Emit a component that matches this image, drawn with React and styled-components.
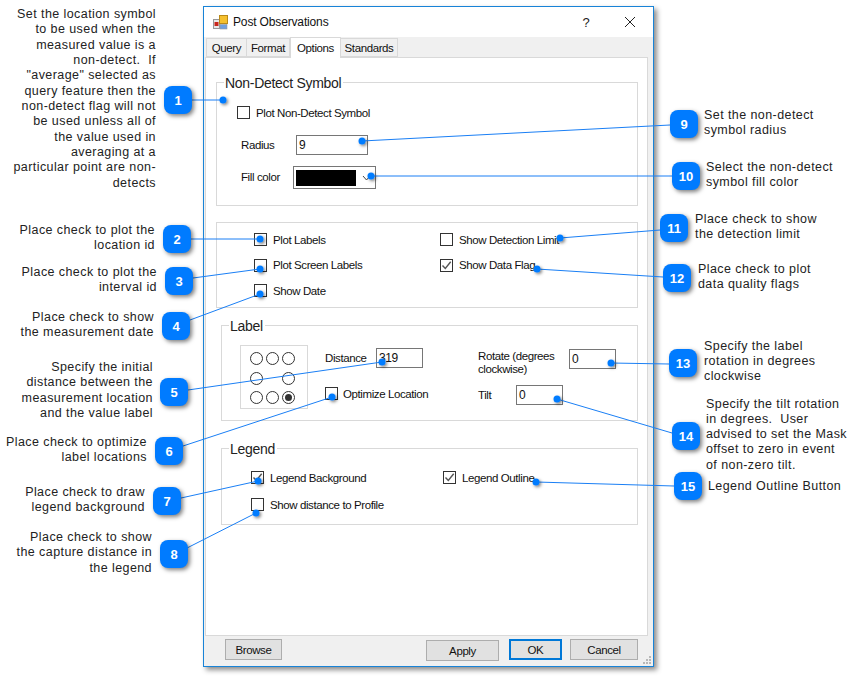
import React from "react";
import styled, { createGlobalStyle, css } from "styled-components";

const GlobalStyle = createGlobalStyle`
  html, body { margin: 0; padding: 0; background: #fff; }
  * { box-sizing: border-box; }
`;

const Canvas = styled.div`
  position: relative;
  width: 853px;
  height: 677px;
  padding: 6px 0 0 203px;
  overflow: hidden;
  font-family: "Liberation Sans", Arial, sans-serif;
`;

const Dialog = styled.div`
  position: relative;
  width: 451px;
  height: 661px;
  display: flex;
  flex-direction: column;
  background: #f0f0f0;
  border: 1px solid #1883d7;
  box-shadow: 3px 3px 5px rgba(0, 0, 0, 0.45);
  font-size: 11.5px;
  letter-spacing: -0.4px;
  color: #111;
`;

const TitleBar = styled.div`
  height: 30px;
  flex: none;
  display: flex;
  align-items: center;
  background: #fff;
  padding-left: 9px;
  font-size: 12px;
  letter-spacing: -0.15px;
`;

const TitleText = styled.span`
  margin-left: 5px;
  flex: 1;
`;

const HelpGlyph = styled.span`
  width: 20px;
  text-align: center;
  font-size: 13px;
  color: #222;
`;

const CloseButton = styled.span`
  display: flex;
  width: 12px;
  margin: 0 17px 0 28px;
`;

const TabStrip = styled.div`
  height: 20px;
  flex: none;
  display: flex;
  align-items: flex-end;
  padding-left: 2px;
`;

const Tab = styled.div`
  width: ${(p) => p.$w}px;
  height: ${(p) => (p.$active ? 21 : 19)}px;
  display: flex;
  align-items: center;
  justify-content: center;
  background: ${(p) => (p.$active ? "#fff" : "#f0f0f0")};
  border: 1px solid #d9d9d9;
  border-left-width: ${(p) => (p.$active ? 1 : 0)}px;
  border-bottom-width: ${(p) => (p.$active ? 0 : 1)}px;
  margin-bottom: ${(p) => (p.$active ? -1 : 0)}px;
  position: relative;
  z-index: ${(p) => (p.$active ? 1 : 0)};
  &:first-child { border-left-width: 1px; }
`;

const Panel = styled.div`
  flex: none;
  height: 579px;
  margin: 0 5px 0 1px;
  padding: 24px 9px 0 10px;
  background: #fff;
  border: 1px solid #d9d9d9;
`;

const Group = styled.div`
  position: relative;
  height: ${(p) => p.$h}px;
  margin-top: ${(p) => p.$top || 0}px;
  margin-left: ${(p) => p.$indent || 0}px;
  border: 1px solid #d9d9d9;
  padding: ${(p) => p.$pad};
`;

const GroupTitle = styled.span`
  position: absolute;
  top: -8px;
  left: 7px;
  padding: 0 2px 0 1px;
  background: #fff;
  font-size: 14px;
  line-height: 16px;
  letter-spacing: -0.3px;
  color: #222;
`;

const CheckRow = styled.div`
  display: flex;
  align-items: center;
  gap: 6px;
  height: 13px;
  white-space: nowrap;
`;

const CheckBox = styled.span`
  width: 13px;
  height: 13px;
  flex: none;
  display: flex;
  background: #fff;
  border: 1px solid #333;
`;

const FieldRow = styled.div`
  display: flex;
  align-items: ${(p) => p.$align || "center"};
  margin-top: ${(p) => p.$top || 0}px;
`;

const FieldLabel = styled.span`
  width: ${(p) => p.$w}px;
  flex: none;
  margin-left: ${(p) => p.$indent || 0}px;
  margin-top: ${(p) => p.$drop || 0}px;
  line-height: 13px;
`;

const ValueBox = styled.div`
  width: ${(p) => p.$w}px;
  height: 20px;
  flex: none;
  display: flex;
  align-items: center;
  padding-left: 2px;
  background: #fff;
  border: 1px solid #767676;
  font-size: 12px;
`;

const ColorCombo = styled.div`
  width: 83px;
  height: 23px;
  display: flex;
  align-items: center;
  padding-left: 2px;
  gap: 6px;
  border: 1px solid #767676;
`;

const ColorSwatch = styled.span`
  width: 60px;
  height: 16px;
  background: #000;
`;

const FlagGrid = styled.div`
  display: grid;
  grid-template-columns: ${(p) => p.$col}px 1fr;
  grid-auto-rows: ${(p) => p.$row}px;
`;

const LabelLayout = styled.div`
  display: flex;
`;

const AnchorGrid = styled.div`
  width: 68px;
  height: 64px;
  flex: none;
  display: grid;
  grid-template-columns: repeat(3, 13px);
  grid-auto-rows: 13px;
  gap: 6.5px 3px;
  padding: 6px 0 0 9px;
  border: 1px solid #d9d9d9;
`;

const Radio = styled.span`
  display: flex;
  align-items: center;
  justify-content: center;
  border: 1px solid #333;
  border-radius: 50%;
  visibility: ${(p) => (p.$empty ? "hidden" : "visible")};
  &::after {
    content: "";
    display: ${(p) => (p.$on ? "block" : "none")};
    width: 7px;
    height: 7px;
    border-radius: 50%;
    background: #333;
  }
`;

const Column = styled.div`
  width: ${(p) => p.$w}px;
  flex: none;
  margin-left: ${(p) => p.$left || 0}px;
  padding-top: ${(p) => p.$top || 0}px;
`;

const OptimizeRow = styled(CheckRow)`
  margin-top: 19px;
  gap: 5px;
`;

const Footer = styled.div`
  flex: 1;
  display: flex;
  align-items: flex-start;
  padding: 3px 15px 0 21px;
`;

const FootButton = styled.div`
  width: ${(p) => p.$w}px;
  height: 21px;
  display: flex;
  align-items: center;
  justify-content: center;
  margin-left: ${(p) => p.$left || 0}px;
  margin-top: ${(p) => p.$top || 0}px;
  background: #e1e1e1;
  border: 1px solid #adadad;
  ${(p) =>
    p.$primary &&
    css`
      border: 2px solid #0078d7;
    `}
`;

const Grip = styled.svg`
  position: absolute;
  right: 1px;
  bottom: 1px;
`;

const ConnectorLayer = styled.svg`
  position: absolute;
  left: 0;
  top: 0;
`;

const Badge = styled.div`
  position: absolute;
  left: ${(p) => p.$x}px;
  top: ${(p) => p.$y}px;
  width: 28px;
  height: 28px;
  display: flex;
  align-items: center;
  justify-content: center;
  background: #007bff;
  border-radius: 8px;
  box-shadow: 2px 2px 4px rgba(0, 0, 0, 0.5);
  color: #fff;
  font-size: 13px;
  font-weight: bold;
`;

const Note = styled.div`
  position: absolute;
  top: ${(p) => p.$y}px;
  ${(p) =>
    p.$right
      ? css`
          right: ${853 - p.$right}px;
          text-align: right;
        `
      : css`
          left: ${p.$left}px;
        `}
  font-size: 12.5px;
  line-height: 15.33px;
  letter-spacing: 0.42px;
  white-space: pre;
  color: #222;
`;

const callouts = [
  { n: 1, x: 164, y: 86, from: [192, 100], to: [223, 100] },
  { n: 2, x: 163, y: 225, from: [191, 239], to: [260, 239] },
  { n: 3, x: 165, y: 267, from: [193, 278], to: [260, 269] },
  { n: 4, x: 162, y: 312, from: [190, 320], to: [260, 294] },
  { n: 5, x: 160, y: 378, from: [188, 390], to: [382, 362] },
  { n: 6, x: 155, y: 437, from: [183, 446], to: [332, 397] },
  { n: 7, x: 153, y: 487, from: [181, 498], to: [258, 481] },
  { n: 8, x: 160, y: 540, from: [187, 548], to: [256, 513] },
  { n: 9, x: 670, y: 110, from: [670, 125], to: [362, 141] },
  { n: 10, x: 672, y: 162, from: [672, 176], to: [371, 176] },
  { n: 11, x: 660, y: 214, from: [660, 230], to: [560, 238] },
  { n: 12, x: 663, y: 264, from: [663, 277], to: [537, 269] },
  { n: 13, x: 669, y: 349, from: [669, 364], to: [611, 363] },
  { n: 14, x: 672, y: 422, from: [672, 433], to: [557, 399] },
  { n: 15, x: 674, y: 472, from: [674, 486], to: [536, 482] },
];

const notes = [
  { right: 156, y: 7, text: 'Set the location symbol\nto be used when the\nmeasured value is a\nnon-detect.  If\n"average" selected as\nquery feature then the\nnon-detect flag will not\nbe used unless all of\nthe value used in\naveraging at a\nparticular point are non-\ndetects' },
  { right: 155, y: 223, text: "Place check to plot the\nlocation id" },
  { right: 157, y: 265, text: "Place check to plot the\ninterval id" },
  { right: 154, y: 310, text: "Place check to show\nthe measurement date" },
  { right: 153, y: 360, text: "Specify the initial\ndistance between the\nmeasurement location\nand the value label" },
  { right: 147, y: 434.5, text: "Place check to optimize\nlabel locations" },
  { right: 145, y: 484.5, text: "Place check to draw\nlegend background" },
  { right: 152, y: 530, text: "Place check to show\nthe capture distance in\nthe legend" },
  { left: 704, y: 107.5, text: "Set the non-detect\nsymbol radius" },
  { left: 706, y: 159.5, text: "Select the non-detect\nsymbol fill color" },
  { left: 695, y: 211.5, text: "Place check to show\nthe detection limit" },
  { left: 698, y: 261.5, text: "Place check to plot\ndata quality flags" },
  { left: 704, y: 338.5, text: "Specify the label\nrotation in degrees\nclockwise" },
  { left: 706, y: 396.5, text: "Specify the tilt rotation\nin degrees.  User\nadvised to set the Mask\noffset to zero in event\nof non-zero tilt." },
  { left: 708, y: 478.5, text: "Legend Outline Button" },
];

const anchors = [0, 0, 0, 0, "empty", 0, 0, 0, "on"];

const AppIcon = () => (
  <svg width="15" height="15" viewBox="0 0 15 15">
    <rect x="0.5" y="4.5" width="6" height="9" fill="#e8e8e8" stroke="#999" />
    <rect x="1.5" y="7" width="4" height="4" fill="#c8261c" />
    <rect x="6.5" y="0.5" width="8" height="8" fill="#f5c02e" stroke="#b98a1a" />
    <rect x="7" y="9.5" width="7" height="4.5" fill="#6f9fe0" stroke="#999" strokeWidth="0.6" />
  </svg>
);

const Check = ({ checked, children, as: Row = CheckRow }) => (
  <Row>
    <CheckBox>
      {checked && (
        <svg width="11" height="11" viewBox="0 0 11 11">
          <path d="M1.5 5.5 L4.3 8.5 L9.7 1.8" fill="none" stroke="#555" strokeWidth="1.4" />
        </svg>
      )}
    </CheckBox>
    {children}
  </Row>
);

export default function App() {
  return (
    <Canvas>
      <GlobalStyle />
      <Dialog>
        <TitleBar>
          <AppIcon />
          <TitleText>Post Observations</TitleText>
          <HelpGlyph>?</HelpGlyph>
          <CloseButton>
            <svg width="12" height="12" viewBox="0 0 12 12">
              <path d="M1 1 L11 11 M11 1 L1 11" stroke="#222" strokeWidth="1" />
            </svg>
          </CloseButton>
        </TitleBar>
        <TabStrip>
          <Tab $w={41}>Query</Tab>
          <Tab $w={43}>Format</Tab>
          <Tab $w={51} $active>Options</Tab>
          <Tab $w={57}>Standards</Tab>
        </TabStrip>
        <Panel>
          <Group $h={124} $pad="23px 0 0 20px">
            <GroupTitle>Non-Detect Symbol</GroupTitle>
            <Check>Plot Non-Detect Symbol</Check>
            <FieldRow $top={16}>
              <FieldLabel $w={55} $indent={4}>Radius</FieldLabel>
              <ValueBox $w={72}>9</ValueBox>
            </FieldRow>
            <FieldRow $top={11}>
              <FieldLabel $w={52} $indent={4}>Fill color</FieldLabel>
              <ColorCombo>
                <ColorSwatch />
                <svg width="9" height="6" viewBox="0 0 9 6">
                  <path d="M1 1 L4.5 5 L8 1" fill="none" stroke="#444" strokeWidth="1" />
                </svg>
              </ColorCombo>
            </FieldRow>
          </Group>

          <Group $h={86} $top={16} $pad="10px 0 0 37px">
            <FlagGrid $col={186} $row={25.5}>
              <Check>Plot Labels</Check>
              <Check>Show Detection Limit</Check>
              <Check>Plot Screen Labels</Check>
              <Check checked>Show Data Flag</Check>
              <Check>Show Date</Check>
            </FlagGrid>
          </Group>

          <Group $h={96} $top={17} $indent={5} $pad="19px 0 0 18px">
            <GroupTitle>Label</GroupTitle>
            <LabelLayout>
              <AnchorGrid>
                {anchors.map((a, i) => (
                  <Radio key={i} $empty={a === "empty"} $on={a === "on"} />
                ))}
              </AnchorGrid>
              <Column $w={153} $left={17} $top={3}>
                <FieldRow>
                  <FieldLabel $w={51}>Distance</FieldLabel>
                  <ValueBox $w={47}>319</ValueBox>
                </FieldRow>
                <Check as={OptimizeRow}>Optimize Location</Check>
              </Column>
              <Column $w={140} $top={4}>
                <FieldRow $align="flex-start">
                  <FieldLabel $w={91} $drop={1}>Rotate (degrees<br />clockwise)</FieldLabel>
                  <ValueBox $w={47}>0</ValueBox>
                </FieldRow>
                <FieldRow $top={9}>
                  <FieldLabel $w={38}>Tilt</FieldLabel>
                  <ValueBox $w={47}>0</ValueBox>
                </FieldRow>
              </Column>
            </LabelLayout>
          </Group>

          <Group $h={77} $top={27} $indent={5} $pad="22px 0 0 29px">
            <GroupTitle>Legend</GroupTitle>
            <FlagGrid $col={192} $row={27}>
              <Check checked>Legend Background</Check>
              <Check checked>Legend Outline</Check>
              <Check>Show distance to Profile</Check>
            </FlagGrid>
          </Group>
        </Panel>
        <Footer>
          <FootButton $w={57}>Browse</FootButton>
          <FootButton $w={73} $left={144} $top={1}>Apply</FootButton>
          <FootButton $w={53} $left={10} $primary>OK</FootButton>
          <FootButton $w={68} $left={8}>Cancel</FootButton>
        </Footer>
        <Grip width="9" height="9" viewBox="0 0 9 9">
          <g fill="#b8b8b8">
            <rect x="6" y="0" width="2" height="2" />
            <rect x="3" y="3" width="2" height="2" />
            <rect x="6" y="3" width="2" height="2" />
            <rect x="0" y="6" width="2" height="2" />
            <rect x="3" y="6" width="2" height="2" />
            <rect x="6" y="6" width="2" height="2" />
          </g>
        </Grip>
      </Dialog>

      <ConnectorLayer width="853" height="677">
        <defs>
          <filter id="dotShadow" x="-60%" y="-60%" width="260%" height="260%">
            <feDropShadow dx="1.5" dy="1.5" stdDeviation="1.5" floodColor="#000" floodOpacity="0.5" />
          </filter>
        </defs>
        {callouts.map((c) => (
          <g key={c.n}>
            <line x1={c.from[0]} y1={c.from[1]} x2={c.to[0]} y2={c.to[1]} stroke="#1a7ff5" strokeWidth="1" />
            <circle cx={c.to[0]} cy={c.to[1]} r="3.5" fill="#007bff" filter="url(#dotShadow)" />
          </g>
        ))}
      </ConnectorLayer>

      {callouts.map((c) => (
        <Badge key={c.n} $x={c.x} $y={c.y}>{c.n}</Badge>
      ))}
      {notes.map((n) => (
        <Note key={n.text} $right={n.right} $left={n.left} $y={n.y}>{n.text}</Note>
      ))}
    </Canvas>
  );
}
